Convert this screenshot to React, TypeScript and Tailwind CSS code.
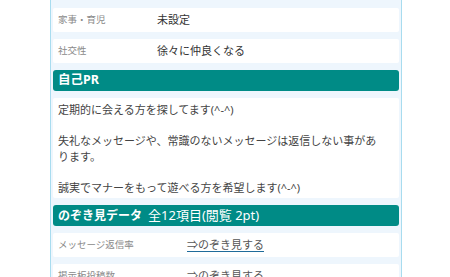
const profile = [
  { label: "家事・育児", value: "未設定" },
  { label: "社交性", value: "徐々に仲良くなる" },
];

const peek = ["メッセージ返信率", "掲示板投稿数"];

const Row = ({ label, children, wide }: { label: string; children: React.ReactNode; wide?: boolean }) => (
  <div className="flex h-[24px] shrink-0 items-center rounded-[2px] bg-white pl-[5px]">
    <div className={`${wide ? "w-[129px]" : "w-[99px]"} text-[9.5px] text-[#8a8a8a]`}>{label}</div>
    <div className="text-[11px] text-[#333]">{children}</div>
  </div>
);

const Heading = ({ children }: { children: React.ReactNode }) => (
  <div className="flex h-[21px] shrink-0 items-center rounded-[3px] bg-[#008b86] pl-[5px] text-[13px] text-white">
    {children}
  </div>
);

export default function App() {
  return (
    <div
      className="h-[277px] w-[450px] overflow-hidden bg-white"
      style={{ fontFamily: '"Noto Sans", "Noto Sans CJK JP", sans-serif' }}
    >
      <div className="ml-[50px] flex h-full w-[352px] flex-col gap-[7px] border-x border-[#a8dcef] bg-[#eef6fd] px-[2px] pt-[8px]">
        {profile.map((p) => (
          <Row key={p.label} label={p.label}>
            {p.value}
          </Row>
        ))}
        <Heading>
          <span className="text-[12.5px] font-bold">自己PR</span>
        </Heading>
        <div className="shrink-0 rounded-[2px] bg-white pb-[3px] pl-[5px] pr-[12px] pt-[4px] text-[11px] leading-[15.5px] text-[#444]">
          <p>定期的に会える方を探してます(^-^)</p>
          <p>&nbsp;</p>
          <p>失礼なメッセージや、常識のないメッセージは返信しない事があります。</p>
          <p>&nbsp;</p>
          <p>誠実でマナーをもって遊べる方を希望します(^-^)</p>
        </div>
        <Heading>
          <span className="text-[12px] font-bold">のぞき見データ</span>
          <span className="ml-[6px]">全12項目(閲覧 2pt)</span>
        </Heading>
        {peek.map((l) => (
          <Row key={l} label={l} wide>
            <a href="#" className="text-[11px] text-[#555] underline decoration-[#1f6b9a] underline-offset-2">
              ⇒のぞき見する
            </a>
          </Row>
        ))}
      </div>
    </div>
  );
}
